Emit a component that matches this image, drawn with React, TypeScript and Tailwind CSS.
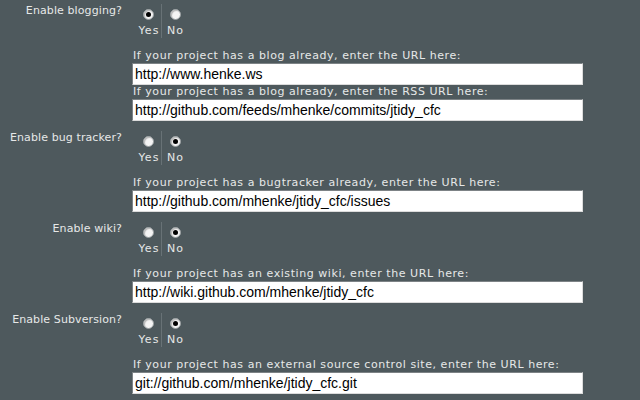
import React from "react";

const labelFont = { fontFamily: '"DejaVu Sans", Verdana, sans-serif' };

function Radio({ checked }: { checked: boolean }) {
  return (
    <div className="w-[11px] h-[11px] rounded-full bg-[#f4f4f4] border border-[#9aa0a2] flex items-center justify-center shadow-[inset_1px_1px_1px_rgba(0,0,0,0.25)]">
      {checked && <div className="w-[5px] h-[5px] rounded-full bg-black" />}
    </div>
  );
}

function YesNo({ yes }: { yes: boolean }) {
  return (
    <div className="flex mt-[4px] ml-[4px] h-[34px] tracking-[1px]">
      <div className="w-[25px] flex flex-col items-center pt-[5px]">
        <Radio checked={yes} />
        <div className="mt-[4px] leading-[13px] pl-[1px]">Yes</div>
      </div>
      <div className="w-px bg-[#687276]" />
      <div className="w-[26px] flex flex-col items-center pt-[5px]">
        <Radio checked={!yes} />
        <div className="mt-[4px] leading-[13px] pl-[1px]">No</div>
      </div>
    </div>
  );
}

function Field({ label, value, first }: { label: string; value: string; first?: boolean }) {
  return (
    <div className={first ? "mt-[11px]" : ""}>
      <div className="leading-[14px] pl-[1px] tracking-[0.56px] whitespace-nowrap">{label}</div>
      <div
        className="w-[451px] h-[22px] bg-white border border-t-[#7d8386] border-l-[#7d8386] border-r-[#dcdcdc] border-b-[#dcdcdc] text-black text-[14px] leading-[20px] pl-[2px] whitespace-nowrap overflow-hidden"
        style={{ fontFamily: '"Liberation Sans", Arial, sans-serif' }}
      >
        {value}
      </div>
    </div>
  );
}

function Section({
  q,
  yes,
  fields,
}: {
  q: string;
  yes: boolean;
  fields: { label: string; value: string }[];
}) {
  return (
    <div className="flex pb-[6px]">
      <div className="w-[132px] pr-[10px] text-right pt-[4px] leading-[13px] tracking-[0.1px]">{q}</div>
      <div className="flex flex-col">
        <YesNo yes={yes} />
        {fields.map((f, i) => (
          <Field key={i} label={f.label} value={f.value} first={i === 0} />
        ))}
      </div>
    </div>
  );
}

export default function App() {
  return (
    <div
      className="w-[640px] h-[400px] overflow-hidden bg-[#4e595d] text-[#e6e8e8] text-[11px]"
      style={labelFont}
    >
      <Section
        q="Enable blogging?"
        yes={true}
        fields={[
          { label: "If your project has a blog already, enter the URL here:", value: "http://www.henke.ws" },
          {
            label: "If your project has a blog already, enter the RSS URL here:",
            value: "http://github.com/feeds/mhenke/commits/jtidy_cfc",
          },
        ]}
      />
      <Section
        q="Enable bug tracker?"
        yes={false}
        fields={[
          {
            label: "If your project has a bugtracker already, enter the URL here:",
            value: "http://github.com/mhenke/jtidy_cfc/issues",
          },
        ]}
      />
      <Section
        q="Enable wiki?"
        yes={false}
        fields={[
          {
            label: "If your project has an existing wiki, enter the URL here:",
            value: "http://wiki.github.com/mhenke/jtidy_cfc",
          },
        ]}
      />
      <Section
        q="Enable Subversion?"
        yes={false}
        fields={[
          {
            label: "If your project has an external source control site, enter the URL here:",
            value: "git://github.com/mhenke/jtidy_cfc.git",
          },
        ]}
      />
    </div>
  );
}
